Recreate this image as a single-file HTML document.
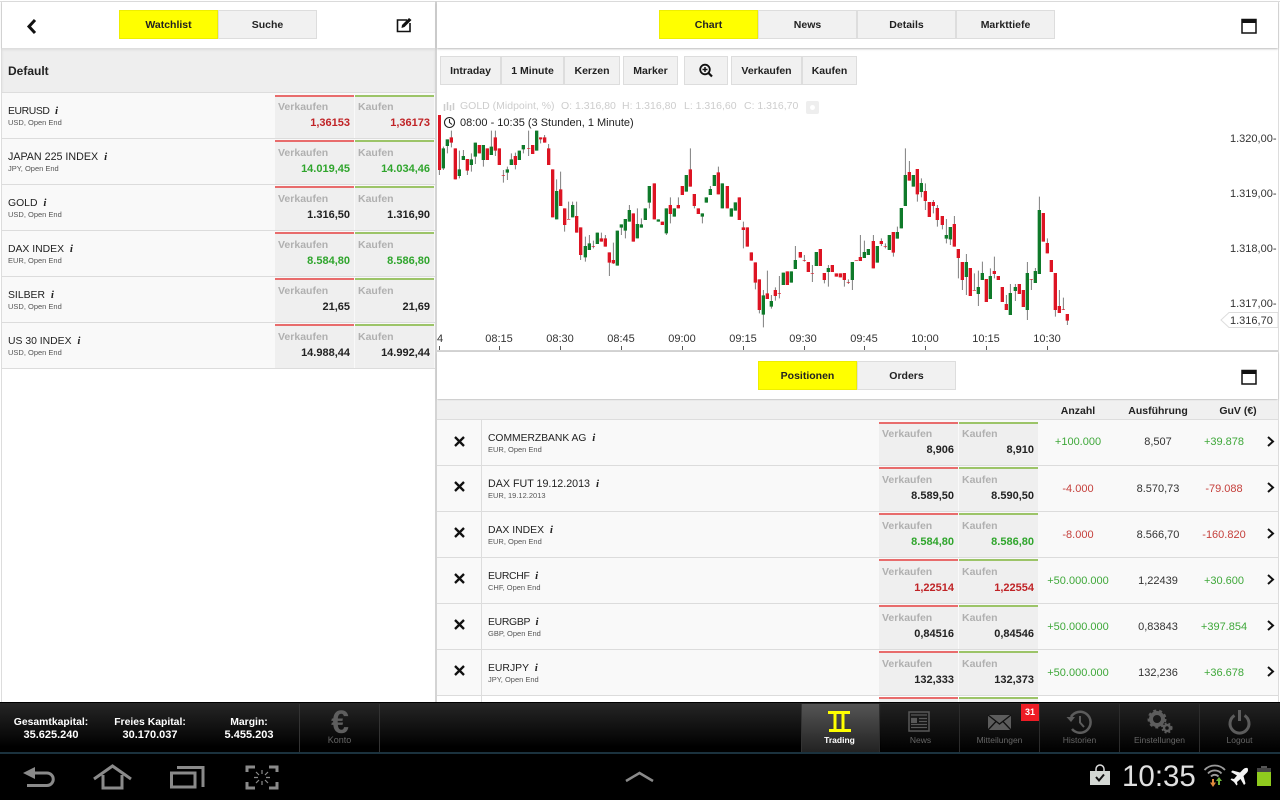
<!DOCTYPE html>
<html><head><meta charset="utf-8"><style>
html,body{margin:0;padding:0;width:1280px;height:800px;overflow:hidden;background:#fff;font-family:"Liberation Sans",sans-serif;color:#111}
div,span{position:absolute;box-sizing:border-box;white-space:nowrap}
.b{background:#f1f1f1;border:1px solid #ddd;text-align:center;font-size:10.5px;font-weight:bold;color:#222;height:29px;line-height:29px}
.y{background:#ffff00;border-color:#eeee00;color:#222}
.r{left:0;height:46px;background:#f9f9f9;border-bottom:1px solid #dcdcdc}
.n{font-size:10.4px;color:#222;top:11px;left:6px;height:14px;line-height:14px}
.n i{position:static;font-family:"Liberation Serif",serif;font-weight:bold;font-size:11px;margin-left:3px}
.s{font-size:7.5px;color:#555;top:25px;left:6px;height:10px;line-height:10px}
.c{width:79px;top:1px;height:44px;background:#efefef;border-top:2px solid #e86c6c}
.g{border-top-color:#9cc468}
.l{left:3px;top:5px;font-size:10.5px;font-weight:bold;color:#b0b0b0;line-height:13px}
.v{right:4px;top:21px;font-size:11px;font-weight:bold;color:#222;line-height:13px}
.t{text-align:center;width:70px;font-size:11px;color:#333;top:16px;line-height:14px}
.re{color:#c02326}.gr{color:#2fa52c}
.t.re{color:#c5403c}.t.gr{color:#3fa83a}
.f .t{top:15px}.f .c{top:2px;height:43px}
.h{font-size:10.5px;font-weight:bold;color:#222;top:405px;line-height:13px;text-align:center;width:90px}
.ax{font-size:11px;color:#333;line-height:13px}
.tk{width:1px;height:4px;top:346px;background:#555}
.tl{top:333px;width:50px;text-align:center;font-size:11px;color:#333;line-height:13px}
.leg{top:100px;font-size:10.5px;color:#cdcdcd;line-height:13px}
.cap{color:#fff;font-weight:bold;font-size:10.4px;text-align:center;width:100px;line-height:13px}
.val{font-size:11px}
.nav{top:704px;width:79px;height:48px;border-right:1px solid #2c2c2c;background:linear-gradient(#222,#000)}
.nl{left:0;width:79px;top:31px;text-align:center;font-size:8.5px;color:#666;line-height:11px}
.p .n{left:51px;top:11px}.p .s{left:51px;top:25px}
</style></head><body>

<!-- backgrounds / dividers -->
<div style="left:0;top:0;width:1280px;height:703px;background:#fff"></div>
<div style="left:0;top:1px;width:1280px;height:1px;background:#ddd"></div>
<div style="left:1px;top:1px;width:1px;height:701px;background:#ddd"></div>
<div style="left:435px;top:1px;width:2px;height:701px;background:#d4d4d4"></div>
<div style="left:1278px;top:1px;width:1px;height:701px;background:#ddd"></div>

<!-- left top bar -->
<div style="left:2px;top:2px;width:433px;height:46px;background:#fff;box-shadow:0 1px 2px #bbb"></div>
<svg style="position:absolute;left:25px;top:18px" width="13" height="17"><path d="M10 2L4 8.500L10 15" fill="none" stroke="#111" stroke-width="3"/></svg>
<div class="b y" style="left:119px;top:10px;width:99px">Watchlist</div>
<div class="b" style="left:218px;top:10px;width:99px">Suche</div>
<svg style="position:absolute;left:396px;top:17px" width="17" height="16"><path d="M11 3H1.500V14.500H14V6" fill="none" stroke="#111" stroke-width="1.600"/><path d="M5.500 11L6 8L13 1L15.500 3L8.500 10Z" fill="#111"/></svg>

<div style="left:2px;top:48px;width:433px;height:46px;background:#eee;border-bottom:2px solid #ddd;box-shadow:inset 0 2px 2px #ddd"></div>
<div style="left:8px;top:64px;font-size:12px;font-weight:bold;color:#222;line-height:15px">Default</div>

<!-- watchlist -->
<div style="left:2px;top:0;width:433px;height:370px">
<div class="r f" style="top:93px;width:433px"><div class="n" style="letter-spacing:-.4px">EURUSD <i>i</i></div><div class="s">USD, Open End</div><div class="c" style="left:273px"><div class="l" style="top:4px">Verkaufen</div><div class="v re" style="top:20px">1,36153</div></div><div class="c g" style="left:353px"><div class="l" style="top:4px">Kaufen</div><div class="v re" style="top:20px">1,36173</div></div></div>
<div class="r" style="top:139px;width:433px"><div class="n" style="font-size:10.7px">JAPAN 225 INDEX <i>i</i></div><div class="s">JPY, Open End</div><div class="c" style="left:273px"><div class="l">Verkaufen</div><div class="v gr">14.019,45</div></div><div class="c g" style="left:353px"><div class="l">Kaufen</div><div class="v gr">14.034,46</div></div></div>
<div class="r" style="top:185px;width:433px"><div class="n">GOLD <i>i</i></div><div class="s">USD, Open End</div><div class="c" style="left:273px"><div class="l">Verkaufen</div><div class="v">1.316,50</div></div><div class="c g" style="left:353px"><div class="l">Kaufen</div><div class="v">1.316,90</div></div></div>
<div class="r" style="top:231px;width:433px"><div class="n">DAX INDEX <i>i</i></div><div class="s">EUR, Open End</div><div class="c" style="left:273px"><div class="l">Verkaufen</div><div class="v gr">8.584,80</div></div><div class="c g" style="left:353px"><div class="l">Kaufen</div><div class="v gr">8.586,80</div></div></div>
<div class="r" style="top:277px;width:433px"><div class="n">SILBER <i>i</i></div><div class="s">USD, Open End</div><div class="c" style="left:273px"><div class="l">Verkaufen</div><div class="v">21,65</div></div><div class="c g" style="left:353px"><div class="l">Kaufen</div><div class="v">21,69</div></div></div>
<div class="r" style="top:323px;width:433px"><div class="n">US 30 INDEX <i>i</i></div><div class="s">USD, Open End</div><div class="c" style="left:273px"><div class="l">Verkaufen</div><div class="v">14.988,44</div></div><div class="c g" style="left:353px"><div class="l">Kaufen</div><div class="v">14.992,44</div></div></div>
</div>

<!-- right top bar -->
<div style="left:437px;top:2px;width:841px;height:46px;background:#fff;box-shadow:0 1px 2px #bbb"></div>
<div class="b y" style="left:659px;top:10px;width:99px">Chart</div>
<div class="b" style="left:758px;top:10px;width:99px">News</div>
<div class="b" style="left:857px;top:10px;width:99px">Details</div>
<div class="b" style="left:956px;top:10px;width:99px">Markttiefe</div>
<svg style="position:absolute;left:1241px;top:18px" width="16" height="17"><rect x="1" y="1.500" width="14" height="13.500" fill="#fff" stroke="#111" stroke-width="1.500"/><rect x="1" y="1" width="14" height="4" fill="#111"/></svg>

<!-- toolbar -->
<div class="b" style="left:440px;top:56px;width:61px">Intraday</div>
<div class="b" style="left:501px;top:56px;width:63px">1 Minute</div>
<div class="b" style="left:564px;top:56px;width:56px">Kerzen</div>
<div class="b" style="left:623px;top:56px;width:55px">Marker</div>
<div class="b" style="left:684px;top:56px;width:44px"></div>
<svg style="position:absolute;left:698px;top:63px" width="16" height="15"><circle cx="7" cy="6.500" r="4.800" fill="none" stroke="#111" stroke-width="1.800"/><path d="M4.500 6.500H9.500M7 4V9" stroke="#111" stroke-width="1.500"/><path d="M10.500 10L14 13.500" stroke="#111" stroke-width="2.200"/></svg>
<div class="b" style="left:731px;top:56px;width:71px">Verkaufen</div>
<div class="b" style="left:802px;top:56px;width:55px">Kaufen</div>

<!-- legend -->
<svg style="position:absolute;left:443px;top:101px" width="13" height="11"><path d="M1.500 3V10M4.500 1V9M7.500 4V10M10.500 2V9" stroke="#ccc" stroke-width="1.500"/></svg>
<div class="leg" style="left:460px">GOLD (Midpoint, %)</div>
<div class="leg" style="left:561px">O: 1.316,80</div>
<div class="leg" style="left:622px">H: 1.316,80</div>
<div class="leg" style="left:684px">L: 1.316,60</div>
<div class="leg" style="left:744px">C: 1.316,70</div>
<div style="left:806px;top:101px;width:13px;height:13px;background:#eee;border-radius:2px"></div>
<div style="left:810px;top:105px;width:5px;height:5px;background:#fff;border-radius:50%"></div>
<svg style="position:absolute;left:443px;top:116px" width="13" height="13"><circle cx="6.500" cy="6.500" r="5" fill="none" stroke="#222" stroke-width="1.100"/><path d="M6.500 3V6.500L9 8.500" fill="none" stroke="#222" stroke-width="1.100"/></svg>
<div style="left:460px;top:116px;font-size:11px;color:#222;line-height:14px">08:00 - 10:35 (3 Stunden, 1 Minute)</div>

<!-- candles -->
<svg style="position:absolute;left:0;top:0" width="1280" height="360">
<defs><clipPath id="cp"><rect x="438" y="100" width="840" height="250"/></clipPath></defs>
<g clip-path="url(#cp)">
<g transform="translate(436 120) scale(.33333)" fill="none">
<path stroke="#666" stroke-width="2.500" d="M10 -15V165M22 80V150M34 58V100M46 32V82M58 85V178M70 92V175M82 90V120M94 117V165M106 100V155M118 68V132M130 75V100M142 75V140M154 85V120M166 32V105M178 32V108M190 85V135M202 150V188M214 140V180M226 100V135M238 98V148M250 92V120M262 75V100M278 32V108M290 75V102M302 32V92M314 52V70M326 45V68M338 72V135M350 148V292M362 178V298M374 155V258M386 265V335M398 245V298M410 245V292M422 245V338M434 322V420M448 350V425M460 345V390M472 362V385M484 338V372M496 338V365M508 345V380M520 397V468M532 368V432M544 332V437M556 313V345M568 297V355M580 255V305M592 280V365M604 265V355M616 295V323M628 265V300M640 198V265M655 190V298M667 298V305M679 305V315M691 265V345M703 232V310M715 265V290M727 232V265M739 198V225M751 165V215M763 85V200M775 222V265M787 265V282M799 280V310M811 232V248M823 198V225M835 165V198M847 140V223M859 190V265M874 198V265M886 265V290M898 247V272M910 232V300M922 305V385M934 322V380"/>
<path stroke="#0f7a2a" stroke-width="10" d="M22 85V145M34 58V78M70 148V168M82 108V120M106 118V135M118 68V110M142 75V120M166 80V105M214 148V158M226 118V135M250 92V120M262 75V88M302 32V92M362 213V298M410 255V292M448 378V412M460 370V390M484 338V372M544 332V437M556 313V323M568 297V332M580 270V305M604 312V355M616 313V323M628 265V300M640 198V248M667 298V305M691 265V340M715 265V290M751 165V215M799 280V290M811 232V248M823 207V225M835 165V198M859 190V265M886 265V290M898 247V272"/>
<path stroke="#dd1423" stroke-width="10" d="M10 -15V150M46 52V68M58 85V178M94 117V152M130 75V100M154 85V120M178 52V92M190 85V135M202 165V167M238 108V135M278 85V87M290 75V102M314 52V58M326 52V68M338 85V135M350 148V292M374 208V258M386 265V315M398 297V299M422 288V338M434 322V405M472 378V380M496 355V365M508 355V380M520 397V428M532 420V430M592 280V365M655 190V298M679 305V315M703 255V282M727 255V265M739 198V225M763 148V200M775 222V258M787 265V282M847 157V223M874 198V265M910 232V300M922 322V330M934 322V380"/>
</g>
<g transform="translate(750 120) scale(.33333)" fill="none">
<path stroke="#666" stroke-width="2.500" d="M4 397V422M16 427V508M28 478V580M40 510V622M52 452V537M64 525V566M76 502V542M88 468V535M100 458V495M112 454V495M124 454V488M136 378V447M151 396V413M163 405V425M175 426V456M187 435V486M199 396V438M211 387V438M223 459V490M235 435V500M247 435V456M259 460V470M271 460V472M283 459V500M295 478V492M307 426V510M319 421V423M331 345V423M343 362V414M355 387V405M370 345V445M382 378V428M394 355V378M406 370V385M418 345V390M430 336V410M442 320V356M454 264V325M466 85V258M478 123V182M490 165V200M502 147V245M514 175V232M526 190V270M538 246V291M550 240V280M562 255V320M577 288V328M589 297V370M601 321V375M613 288V380M625 387V475M637 426V510M649 402V525M661 444V528M673 460V512M685 452V558M697 425V480M709 477V546M721 445V537M733 410V475M745 468V480M757 501V546M769 525V570M781 492V585M796 492V543M808 492V522M820 510V561M832 426V600M844 478V510M856 444V489M868 230V462M880 279V365M892 355V400M904 420V456M916 459V590M928 510V579M940 533V569M952 582V615"/>
<path stroke="#0f7a2a" stroke-width="10" d="M40 526V584M64 543V560M100 458V495M124 454V488M136 420V447M199 396V438M235 444V456M307 426V480M343 396V414M355 387V405M382 378V428M418 345V390M442 336V356M454 264V325M466 165V258M490 165V200M514 189V216M589 345V356M601 321V358M649 426V471M685 501V522M697 459V480M721 468V537M781 519V585M796 501V513M832 459V570M856 453V489M868 270V462"/>
<path stroke="#dd1423" stroke-width="10" d="M4 397V422M16 427V488M28 478V570M52 520V537M76 510V528M88 519V521M112 454V495M151 396V413M163 420V422M175 426V456M187 459V461M211 387V438M223 459V480M247 435V456M259 460V470M271 460V472M283 459V480M295 487V489M319 421V423M331 411V423M370 363V445M394 363V372M406 378V380M430 336V398M478 156V182M502 147V223M526 213V243M538 246V291M550 246V258M562 264V300M577 288V315M613 312V380M625 387V414M637 426V480M661 444V528M673 510V512M709 477V546M733 453V462M745 468V480M757 501V546M769 552V570M808 492V522M820 510V561M844 477V479M880 279V365M892 369V400M904 420V456M916 459V570M928 558V579M940 568V570M952 582V602"/>
</g>
</g>
</svg>

<!-- axes -->
<div class="ax" style="left:1230px;top:133px">1.320,00-</div>
<div class="ax" style="left:1230px;top:188px">1.319,00-</div>
<div class="ax" style="left:1230px;top:243px">1.318,00-</div>
<div class="ax" style="left:1230px;top:298px">1.317,00-</div>
<svg style="position:absolute;left:1220px;top:311px" width="59" height="18"><path d="M1 9L9 1.500H58V16.500H9Z" fill="#fff" stroke="#ddd"/></svg>
<div class="ax" style="left:1230px;top:315px">1.316,70</div>

<div class="ax" style="left:437px;top:333px">4</div>
<div class="tk" style="left:439px"></div>
<div class="tl" style="left:474px">08:15</div><div class="tk" style="left:499px"></div>
<div class="tl" style="left:535px">08:30</div><div class="tk" style="left:560px"></div>
<div class="tl" style="left:596px">08:45</div><div class="tk" style="left:621px"></div>
<div class="tl" style="left:657px">09:00</div><div class="tk" style="left:682px"></div>
<div class="tl" style="left:718px">09:15</div><div class="tk" style="left:743px"></div>
<div class="tl" style="left:778px">09:30</div><div class="tk" style="left:804px"></div>
<div class="tl" style="left:839px">09:45</div><div class="tk" style="left:864px"></div>
<div class="tl" style="left:900px">10:00</div><div class="tk" style="left:925px"></div>
<div class="tl" style="left:961px">10:15</div><div class="tk" style="left:986px"></div>
<div class="tl" style="left:1022px">10:30</div><div class="tk" style="left:1047px"></div>

<div style="left:437px;top:350px;width:841px;height:2px;background:#d4d4d4"></div>

<!-- positions bar -->
<div style="left:437px;top:352px;width:841px;height:47px;background:#fff;box-shadow:0 1px 2px #bbb"></div>
<div class="b y" style="left:758px;top:361px;width:99px">Positionen</div>
<div class="b" style="left:857px;top:361px;width:99px">Orders</div>
<svg style="position:absolute;left:1241px;top:369px" width="16" height="17"><rect x="1" y="1.500" width="14" height="13.500" fill="#fff" stroke="#111" stroke-width="1.500"/><rect x="1" y="1" width="14" height="4" fill="#111"/></svg>

<div style="left:437px;top:401px;width:841px;height:19px;background:#f0f0f0;border-bottom:1px solid #ddd"></div>
<div class="h" style="left:1033px">Anzahl</div>
<div class="h" style="left:1113px">Ausführung</div>
<div class="h" style="left:1193px">GuV (€)</div>

<!-- positions -->
<div class="p" style="left:437px;top:0;width:841px;height:702px;overflow:hidden">
<div class="r f" style="top:420px;width:841px"><div class="n" style="font-size:10.3px">COMMERZBANK AG <i>i</i></div><div class="s">EUR, Open End</div><div class="c" style="left:442px"><div class="l" style="top:4px">Verkaufen</div><div class="v" style="top:20px">8,906</div></div><div class="c g" style="left:522px"><div class="l" style="top:4px">Kaufen</div><div class="v" style="top:20px">8,910</div></div><div class="t gr" style="left:606px">+100.000</div><div class="t" style="left:686px">8,507</div><div class="t gr" style="left:752px">+39.878</div></div>
<div class="r" style="top:466px;width:841px"><div class="n" style="font-size:10.7px">DAX FUT 19.12.2013 <i>i</i></div><div class="s">EUR, 19.12.2013</div><div class="c" style="left:442px"><div class="l">Verkaufen</div><div class="v">8.589,50</div></div><div class="c g" style="left:522px"><div class="l">Kaufen</div><div class="v">8.590,50</div></div><div class="t re" style="left:606px">-4.000</div><div class="t" style="left:686px">8.570,73</div><div class="t re" style="left:752px">-79.088</div></div>
<div class="r" style="top:512px;width:841px"><div class="n">DAX INDEX <i>i</i></div><div class="s">EUR, Open End</div><div class="c" style="left:442px"><div class="l">Verkaufen</div><div class="v gr">8.584,80</div></div><div class="c g" style="left:522px"><div class="l">Kaufen</div><div class="v gr">8.586,80</div></div><div class="t re" style="left:606px">-8.000</div><div class="t" style="left:686px">8.566,70</div><div class="t re" style="left:752px">-160.820</div></div>
<div class="r" style="top:558px;width:841px"><div class="n" style="letter-spacing:-.3px">EURCHF <i>i</i></div><div class="s">CHF, Open End</div><div class="c" style="left:442px"><div class="l">Verkaufen</div><div class="v re">1,22514</div></div><div class="c g" style="left:522px"><div class="l">Kaufen</div><div class="v re">1,22554</div></div><div class="t gr" style="left:606px">+50.000.000</div><div class="t" style="left:686px">1,22439</div><div class="t gr" style="left:752px">+30.600</div></div>
<div class="r" style="top:604px;width:841px"><div class="n" style="letter-spacing:-.3px">EURGBP <i>i</i></div><div class="s">GBP, Open End</div><div class="c" style="left:442px"><div class="l">Verkaufen</div><div class="v">0,84516</div></div><div class="c g" style="left:522px"><div class="l">Kaufen</div><div class="v">0,84546</div></div><div class="t gr" style="left:606px">+50.000.000</div><div class="t" style="left:686px">0,83843</div><div class="t gr" style="left:752px">+397.854</div></div>
<div class="r" style="top:650px;width:841px"><div class="n">EURJPY <i>i</i></div><div class="s">JPY, Open End</div><div class="c" style="left:442px"><div class="l">Verkaufen</div><div class="v">132,333</div></div><div class="c g" style="left:522px"><div class="l">Kaufen</div><div class="v">132,373</div></div><div class="t gr" style="left:606px">+50.000.000</div><div class="t" style="left:686px">132,236</div><div class="t gr" style="left:752px">+36.678</div></div>
<div class="c" style="left:442px;top:697px;height:5px"></div>
<div class="c g" style="left:522px;top:697px;height:5px"></div>
<div style="left:44px;top:420px;width:1px;height:282px;background:#ddd"></div>
</div>
<svg style="position:absolute;left:437px;top:420px" width="842" height="280" fill="none" stroke="#111">
<g stroke-width="2.300"><path d="M18 17L27 26M27 17L18 26"/><path d="M18 62L27 71M27 62L18 71"/><path d="M18 108L27 117M27 108L18 117"/><path d="M18 154L27 163M27 154L18 163"/><path d="M18 200L27 209M27 200L18 209"/><path d="M18 246L27 255M27 246L18 255"/></g>
<g stroke-width="2"><path d="M831 17L836 21.500L831 26"/><path d="M831 63L836 67.500L831 72"/><path d="M831 109L836 113.500L831 118"/><path d="M831 155L836 159.500L831 164"/><path d="M831 201L836 205.500L831 210"/><path d="M831 247L836 251.500L831 256"/></g>
</svg>

<!-- bottom bar -->
<div style="left:0;top:702px;width:1280px;height:98px;background:#000"></div>
<div style="left:0;top:703px;width:1280px;height:49px;background:linear-gradient(#262626,#000 90%)"></div>
<div style="left:0;top:752px;width:1280px;height:2px;background:#1b323e"></div>
<div class="cap" style="left:1px;top:716px">Gesamtkapital:</div><div class="cap val" style="left:1px;top:729px">35.625.240</div>
<div class="cap" style="left:100px;top:716px">Freies Kapital:</div><div class="cap val" style="left:100px;top:729px">30.170.037</div>
<div class="cap" style="left:199px;top:716px">Margin:</div><div class="cap val" style="left:199px;top:729px">5.455.203</div>
<div style="left:299px;top:704px;width:1px;height:48px;background:#333"></div>
<div style="left:379px;top:704px;width:1px;height:48px;background:#333"></div>
<div style="left:324px;top:706px;width:32px;font-size:32px;color:#5e5e5e;font-weight:bold;text-align:center;line-height:32px">€</div>
<div style="left:300px;top:735px;width:79px;text-align:center;font-size:9px;color:#666;line-height:11px">Konto</div>

<div class="nav" style="left:801px;background:linear-gradient(#555,#222);border-left:1px solid #333"><div class="nl" style="color:#fff;font-weight:bold;left:-2px">Trading</div>
<svg style="position:absolute;left:24px;top:6px" width="26" height="24"><path d="M2 2.500H24M3 20.500H25M9 3V20M17 3V20" stroke="#ffff00" stroke-width="3" fill="none"/></svg></div>
<div class="nav" style="left:881px"><div class="nl">News</div>
<svg style="position:absolute;left:27px;top:7px" width="22" height="21"><rect x="1" y="1" width="20" height="19" fill="none" stroke="#585858" stroke-width="1.500"/><path d="M3 4H19M3 7.500H9M11 7.500H19M11 10.500H19M3 13.500H19M3 16.500H19" stroke="#585858" stroke-width="1.300"/><rect x="3" y="7" width="6" height="5" fill="#585858"/></svg></div>
<div class="nav" style="left:960px;width:80px"><div class="nl">Mitteilungen</div>
<svg style="position:absolute;left:27px;top:10px" width="25" height="17"><rect x="1" y="1" width="23" height="15" fill="#5c5c5c"/><path d="M1 1L12.500 10L24 1M1 16L9 7.500M24 16L16 7.500" fill="none" stroke="#111" stroke-width="1.300"/></svg></div>
<div style="left:1021px;top:704px;width:18px;height:17px;background:#ee1c25;color:#fff;font-size:9px;font-weight:bold;text-align:center;line-height:16px">31</div>
<div class="nav" style="left:1040px;width:80px"><div class="nl">Historien</div>
<svg style="position:absolute;left:26px;top:5px" width="27" height="25"><path d="M5 8A10.500 10.500 0 1 1 6 20" fill="none" stroke="#5c5c5c" stroke-width="2.500"/><path d="M0.500 8H9L5 13Z" fill="#5c5c5c"/><path d="M14 7V13.500L18 18" fill="none" stroke="#5c5c5c" stroke-width="2"/></svg></div>
<div class="nav" style="left:1120px;width:80px"><div class="nl">Einstellungen</div>
<svg style="position:absolute;left:27px;top:5px" width="26" height="25"><circle cx="10" cy="10" r="6" fill="none" stroke="#5c5c5c" stroke-width="4"/><circle cx="10" cy="10" r="8.500" fill="none" stroke="#5c5c5c" stroke-width="2" stroke-dasharray="3 3"/><circle cx="20" cy="19" r="3" fill="none" stroke="#5c5c5c" stroke-width="2.500"/><circle cx="20" cy="19" r="4.800" fill="none" stroke="#5c5c5c" stroke-width="1.500" stroke-dasharray="2 2"/></svg></div>
<div class="nav" style="left:1200px;width:80px;border-right:0"><div class="nl">Logout</div>
<svg style="position:absolute;left:27px;top:5px" width="26" height="26"><path d="M7.500 6.500A9.500 9.500 0 1 0 17.500 6.500" fill="none" stroke="#5c5c5c" stroke-width="3"/><path d="M12.500 1V12" stroke="#5c5c5c" stroke-width="3"/></svg></div>

<!-- system bar -->
<svg style="position:absolute;left:0;top:755px" width="300" height="45" fill="none" stroke="#8a8a8a" stroke-width="3">
<path d="M32 18H47A6 6 0 0 1 47 30.500H27"/><path d="M23 18L35 12V24Z" fill="#8a8a8a" stroke="none"/>
<path d="M94 24L112.500 11L131 24"/><path d="M103 20V33H122V20"/>
<path d="M171.500 18H195V32H171.500Z"/><path d="M177 12.500H203V32"/>
<path d="M247 17V12H255M269 12H277V17M247 27V33H255M269 33H277V27"/>
<path stroke-width="1.200" d="M262 15V19M262 26V30M254 22.500H258M266 22.500H270M256 17L259 20M268 17L265 20M256 28L259 25M268 28L265 25"/>
</svg>
<svg style="position:absolute;left:625px;top:771px" width="30" height="12"><path d="M1 10L14.500 2L28 10" fill="none" stroke="#8a8a8a" stroke-width="2.500"/></svg>

<svg style="position:absolute;left:1089px;top:764px" width="22" height="22"><path d="M7 7V5A4 4 0 0 1 15 5V7" fill="none" stroke="#ddd" stroke-width="1.500"/><rect x="1" y="7" width="20" height="14" fill="#d4d8d4"/><path d="M7 13L10 16.500L15 10.500" fill="none" stroke="#111" stroke-width="2"/></svg>
<div style="left:1122px;top:759px;font-size:29.5px;color:#e0e0e0;line-height:36px">10:35</div>
<svg style="position:absolute;left:1203px;top:763px" width="24" height="25"><path d="M1.500 7A14 14 0 0 1 22 7M5 10.500A9 9 0 0 1 18.500 10.500M8 13.500A5 5 0 0 1 15.500 13.500" fill="none" stroke="#9a9a9a" stroke-width="1.800"/><path d="M10 16V21" stroke="#e08a3c" stroke-width="2"/><path d="M7 19.500H13L10 24Z" fill="#e08a3c"/><path d="M16 17V22" stroke="#6fb83a" stroke-width="2"/><path d="M13 18H19L16 14Z" fill="#6fb83a"/></svg>
<svg style="position:absolute;left:1230px;top:767px" width="19" height="19"><path d="M17.500 1C16 .5 14 1 12.500 3L10 5.500L2.500 3.500L1 5L7 8.500L4 12L1.500 11.500L.5 12.500L4 15L6.500 18.500L7.500 17.500L7 15L10.500 12L14 18L15.500 16.500L13.500 9L16 6.500C18 5 18.500 3 17.500 1Z" fill="#f4f4f4"/></svg>
<div style="left:1261px;top:766px;width:6px;height:2px;background:#555"></div>
<div style="left:1257px;top:768px;width:14px;height:5px;background:#444"></div>
<div style="left:1257px;top:772px;width:14px;height:14px;background:#8fca1e"></div>
</body></html>
